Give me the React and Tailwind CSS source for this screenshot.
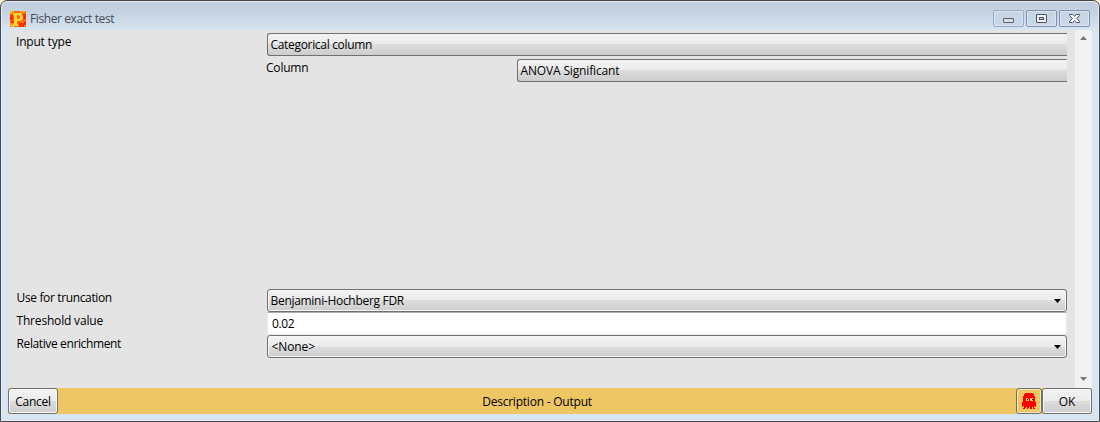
import React from "react";

const GHOST = [
  "...RRRRRRRR...",
  "..RRRRRRRRRR..",
  "..RRRRRRRRRR..",
  ".RRRRRRRRRRRR.",
  ".RRRRRRRRRRRR.",
  ".RRRYYRRYYYRR.",
  ".RRRYKYRYYKRR.",
  ".RRRYYYRYYYRR.",
  ".RRRRRRRRRRRR.",
  "RRRRRRRRRRRRRR",
  "RRRRRRRRRRRRRR",
  "RRRRRRRRRRRRRR",
  "RRRRRRRRRRRRRR",
  "R.RRRRRRRRRR.R",
  "..RR.RR.RR.R..",
  ".RR..R..RR.RR.",
];

const GHOST_COLORS = { R: "#ff0000", Y: "#e8c860", K: "#101000" };

function Ghost() {
  return (
    <svg width="14" height="16" viewBox="0 0 14 16" shapeRendering="crispEdges">
      {GHOST.flatMap((row, y) =>
        [...row].map((c, x) =>
          c === "." ? null : (
            <rect key={`${x}-${y}`} x={x} y={y} width="1" height="1" fill={GHOST_COLORS[c]} />
          )
        )
      )}
    </svg>
  );
}

function AppIcon() {
  return (
    <svg width="16" height="16" viewBox="0 0 16 16" shapeRendering="crispEdges">
      <rect width="16" height="16" fill="#fb6a06" />
      <path d="M0 0h4v3H0zM0 12h4v3H0zM12 11h4v4h-4zM10 0h4v2h-4z" fill="#ff9a10" />
      <path d="M0 4h3v5H0zM13 3h3v5h-3zM9 12h5v4H9zM1 10h3v2H1z" fill="#f83200" />
      <path d="M13 5h3v2h-3zM0 6h2v2H0zM14 11h2v3h-2z" fill="#ff1c00" />
      <path d="M0 0h2v2H0zM1 14h3v2H1zM13 0h2v1h-2z" fill="#ffc21c" />
      <path
        d="M3 2h8v1h1v1h1v4h-1v1h-1v1H7v3h1v2H3v-2h1V4H3zM7 4v4h2V7h1V5H9V4z"
        fillRule="evenodd"
        fill="#ffd23a"
      />
    </svg>
  );
}

function CaptionButton({ children, strong }) {
  return (
    <div
      className={`flex h-[17px] w-[31px] items-center justify-center rounded-[2px] border bg-gradient-to-b from-[#c6d4e3] to-[#c9d9ea] shadow-[inset_0_0_0_1px_#d8e4f0] ${
        strong ? "border-[#8290b4]" : "border-[#9aabbf]"
      }`}
    >
      {children}
    </div>
  );
}

function Combo({ text, open = false, pad = "pl-[2.5px]", track = "" }) {
  return (
    <div
      className={`flex h-[23px] min-w-0 flex-1 items-center justify-between border-[#707070] bg-[linear-gradient(to_bottom,#f3f3f3_0%,#ebebeb_50%,#dddddd_50%,#cdcdcd_100%)] ${pad} ${
        open ? "rounded-l-[3px] border-y border-l" : "rounded-[3px] border pr-[5px] shadow-[inset_0_0_0_1px_#f6f6f6]"
      }`}
    >
      <span className={`leading-4 ${track}`}>{text}</span>
      {!open && (
        <svg width="7" height="4" viewBox="0 0 7 4">
          <path d="M0 0h7L3.5 4z" fill="#000" />
        </svg>
      )}
    </div>
  );
}

function Label({ children, className = "" }) {
  return <div className={`shrink-0 leading-4 ${className}`}>{children}</div>;
}

export default function App() {
  return (
    <div className="h-[422px] w-[1100px] overflow-hidden bg-[#fbeecb] font-['Open_Sans','Noto_Sans',sans-serif] text-[12px] tracking-[-0.15px] text-black">
      <div className="flex h-full flex-col rounded-t-[7px] border border-[#48484c] bg-[linear-gradient(to_bottom,#bfcddc_0px,#c5d3e2_12px,#d7e4f2_29px,#d7e4f2_100%)] px-[7px] pb-[7px] shadow-[inset_0_0_0_1px_#e4edf6]">
        <div className="flex h-[29px] shrink-0 items-start justify-between pl-[2px] pr-[2px] pt-[9px]">
          <div className="flex items-center gap-[4px]">
            <AppIcon />
            <span className="pt-px leading-4 tracking-[-0.4px] text-[#414b58]">Fisher exact test</span>
          </div>
          <div className="flex gap-[2px]">
            <CaptionButton>
              <svg width="11" height="5" viewBox="0 0 11 5" className="mt-[3px]">
                <rect x="0.5" y="0.5" width="10" height="4" rx="0.5" fill="#dedede" stroke="#58606e" />
              </svg>
            </CaptionButton>
            <CaptionButton strong>
              <svg width="11" height="9" viewBox="0 0 11 9">
                <rect x="0.5" y="0.5" width="10" height="8" rx="0.5" fill="#f4f4f6" stroke="#4c5266" />
                <rect x="3.5" y="3.5" width="4" height="2" fill="#c4cce0" stroke="#4c5266" />
              </svg>
            </CaptionButton>
            <CaptionButton strong>
              <svg width="11" height="9" viewBox="0 0 11 9">
                <path
                  d="M.5 .5h3.200l1.800 1.700L7.300 .5h3.200v1L7.800 4.500l2.700 3v1H7.300L5.500 6.800 3.700 8.500H.5v-1l2.700-3-2.700-3z"
                  fill="#fafafa"
                  stroke="#4c5266"
                />
              </svg>
            </CaptionButton>
          </div>
        </div>

        <div className="flex min-h-0 flex-1 bg-[#e4e4e4]">
          <div className="flex w-[1067px] shrink-0 flex-col pl-[8px] pr-[8px] pt-[3px]">
            <div className="flex">
              <Label className="w-[251px] pt-px tracking-[-0.2px]">Input type</Label>
              <div className="flex min-w-0 flex-1 flex-col gap-[3px]">
                <div className="flex">
                  <Combo open text="Categorical column" track="tracking-[-0.32px]" />
                </div>
                <div className="flex">
                  <Label className="-ml-px w-[251px] pt-px tracking-[-0.2px]">Column</Label>
                  <Combo open text="ANOVA Significant" />
                </div>
              </div>
            </div>
            <div className="mt-[207px] flex">
              <Label className="w-[251px] pt-px pl-[0.5px] tracking-[-0.36px]">Use for truncation</Label>
              <Combo text="Benjamini-Hochberg FDR" track="tracking-[-0.3px]" />
            </div>
            <div className="flex">
              <Label className="w-[251px] pt-px pl-[0.5px] tracking-[-0.18px]">Threshold value</Label>
              <div className="flex h-[23px] flex-1 items-center border border-[#e3e9ef] border-t-[#abadb3] bg-white pl-[4px] leading-4 tracking-[-0.4px]">
                0.02
              </div>
            </div>
            <div className="flex">
              <Label className="w-[251px] pt-px pl-[0.5px] tracking-[-0.38px]">Relative enrichment</Label>
              <Combo text="<None>" pad="pl-[3.5px]" track="tracking-[-0.1px]" />
            </div>
          </div>
          <div className="flex flex-1 flex-col items-center justify-between bg-[#f2f2f2] pb-[7px] pt-[6px]">
            <svg width="7" height="4" viewBox="0 0 7 4">
              <path d="M3.500 0L7 4H0z" fill="#77777a" />
            </svg>
            <svg width="7" height="4" viewBox="0 0 7 4">
              <path d="M0 0h7L3.500 4z" fill="#77777a" />
            </svg>
          </div>
        </div>

        <div className="flex h-[26px] shrink-0 bg-[#eec764]">
          <button className="w-[50px] rounded-[3px] border border-[#707070] bg-[linear-gradient(to_bottom,#f3f3f3_0%,#ebebeb_50%,#dddddd_50%,#cdcdcd_100%)] pt-px tracking-[-0.3px] shadow-[inset_0_0_0_1px_#f8f8f8]">
            Cancel
          </button>
          <div className="flex flex-1 items-center justify-center pt-px tracking-[-0.22px]">Description - Output</div>
          <button className="flex w-[26px] items-center justify-center rounded-[3px] border border-[#707070] bg-[#eec764] shadow-[inset_0_0_0_1px_#f8e6b8]">
            <Ghost />
          </button>
          <button className="w-[50px] rounded-[3px] border border-[#707070] bg-[linear-gradient(to_bottom,#f3f3f3_0%,#ebebeb_50%,#dddddd_50%,#cdcdcd_100%)] pt-px shadow-[inset_0_0_0_1px_#f8f8f8]">
            OK
          </button>
        </div>
      </div>
    </div>
  );
}
